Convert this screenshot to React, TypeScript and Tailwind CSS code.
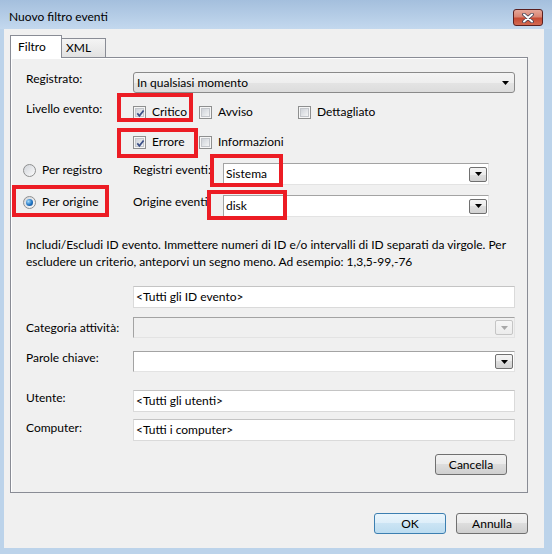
import React from "react";

const font = "font-['Lato',sans-serif] text-[12px] leading-[16px] text-black";

function Arrow({ color = "#000000" }: { color?: string }) {
  return (
    <svg width="7" height="4" viewBox="0 0 7 4">
      <path d="M0 0h7L3.5 4z" fill={color} />
    </svg>
  );
}

function DropButton({ disabled }: { disabled?: boolean }) {
  return (
    <span
      className={
        disabled
          ? "flex h-[15px] w-[18px] shrink-0 items-center justify-center rounded-[2px] border border-[#c5c5c5] bg-[linear-gradient(#f6f6f6,#ececec)]"
          : "flex h-[15px] w-[18px] shrink-0 items-center justify-center rounded-[2px] border border-[#707070] bg-[linear-gradient(#f4f4f4_0%,#ececec_50%,#dedede_50%,#d2d2d2_100%)]"
      }
    >
      <Arrow color={disabled ? "#a8a8a8" : "#000000"} />
    </span>
  );
}

function Check({ checked }: { checked?: boolean }) {
  return (
    <span className="relative flex h-[13px] w-[13px] shrink-0 items-center justify-center border border-[#8e8f8f] bg-[#f6f6f6]">
      <span className="h-[9px] w-[9px] border border-[#c3c6cb] bg-[linear-gradient(135deg,#cfd3d9,#f3f4f5)]" />
      {checked ? (
        <svg className="absolute left-[1px] top-[1px]" width="11" height="11" viewBox="0 0 11 11">
          <path d="M2.3 5.4L4.4 7.8L8.6 2.4" fill="none" stroke="#3c4f86" strokeWidth="1.7" />
        </svg>
      ) : null}
    </span>
  );
}

function Radio({ checked }: { checked?: boolean }) {
  return (
    <span className="flex h-[13px] w-[13px] shrink-0 items-center justify-center rounded-full border border-[#8e8f8f] bg-[linear-gradient(135deg,#d2d5da,#fbfbfb)]">
      {checked ? (
        <span className="h-[7px] w-[7px] rounded-full bg-[radial-gradient(circle_at_35%_35%,#a8dcfa,#1f74c4_55%,#0e3d78)]" />
      ) : null}
    </span>
  );
}

function Option({ label, checked, width }: { label: string; checked?: boolean; width: string }) {
  return (
    <div className={`flex items-center ${width}`}>
      <Check checked={checked} />
      <span className="ml-[6px]">{label}</span>
    </div>
  );
}

function EditCombo({ value, width, disabled }: { value: string; width: string; disabled?: boolean }) {
  return (
    <div
      className={`flex h-full items-center border border-t-[#a3a3a3] border-l-[#a3a3a3] border-r-[#e3e3e3] border-b-[#e3e3e3] pl-[1px] pr-[1px] ${width} ${
        disabled ? "bg-[#f0f0f0]" : "bg-white"
      }`}
    >
      <span className="flex-1 pl-[1px]">{value}</span>
      <DropButton disabled={disabled} />
    </div>
  );
}

function TextBox({ value }: { value: string }) {
  return (
    <div className="flex h-full w-[382px] items-center border border-[#dadada] border-t-[#c4c4c4] bg-white pl-[2px]">
      {value}
    </div>
  );
}

function PushButton({ label, primary, width }: { label: string; primary?: boolean; width: string }) {
  return (
    <div
      className={`flex h-[21px] items-center justify-center rounded-[3px] border ${width} ${
        primary
          ? "border-[#3c7fb1] bg-[linear-gradient(#eaf5fc_0%,#ddeef9_50%,#cbe4f4_50%,#bcdcf0_100%)]"
          : "border-[#707070] bg-[linear-gradient(#f2f2f2_0%,#ebebeb_50%,#dddddd_50%,#cfcfcf_100%)]"
      }`}
    >
      {label}
    </div>
  );
}

export default function App() {
  return (
    <div className={`relative flex h-[554px] w-[552px] flex-col overflow-hidden bg-[#bcd3ea] ${font}`}>
      {/* title bar */}
      <div className="flex h-[29px] shrink-0 items-start justify-between bg-[linear-gradient(#a4bfdd,#c3d8ee)] pl-[9px] pr-[9px]">
        <span className="mt-[9px]">Nuovo filtro eventi</span>
        <div className="mt-[9px] flex h-[17px] w-[30px] items-center justify-center rounded-[3px] border border-[#5a2020] bg-[linear-gradient(#e6a799_0%,#d98573_45%,#c64a33_55%,#d36a52_100%)]">
          <svg width="12" height="10" viewBox="0 0 12 10">
            <path d="M2 1.5L10 8.5M10 1.5L2 8.5" stroke="#3f3f52" strokeWidth="3.6" strokeLinecap="round" />
            <path d="M2 1.5L10 8.5M10 1.5L2 8.5" stroke="#ffffff" strokeWidth="2" strokeLinecap="round" />
          </svg>
        </div>
      </div>

      {/* client area */}
      <div className="mb-[6px] ml-[4px] mr-[8px] flex flex-1 flex-col bg-[#f0f0f0]">
        <div className="ml-[6px] mt-[6px] flex h-[22px] items-start">
          <div className="relative z-10 h-[23px] w-[52px] border border-b-0 border-[#898c95] bg-white pl-[7px] pt-[3px]">
            Filtro
          </div>
          <div className="-ml-[1px] mt-[3px] h-[19px] w-[45px] border border-b-0 border-[#898c95] bg-[linear-gradient(#f4f4f4,#e2e2e2)] pl-[4px] pt-[1px]">
            XML
          </div>
        </div>

        <div className="ml-[6px] h-[436px] w-[518px] border border-[#898c95] shadow-[inset_1px_1px_0_#ffffff]">
          {/* Registrato */}
          <div className="mt-[14px] flex h-[21px] items-start pl-[15px]">
            <span className="-mt-[1px] w-[107px]">Registrato:</span>
            <div className="flex h-[21px] w-[382px] items-center rounded-[3px] border border-[#8a8a8a] bg-[linear-gradient(#f4f4f4_0%,#eeeeee_50%,#e4e4e4_50%,#dcdcdc_100%)] pl-[3px] pr-[5px]">
              <span className="flex-1">In qualsiasi momento</span>
              <Arrow />
            </div>
          </div>

          {/* Livello evento */}
          <div className="mt-[11px] flex h-[16px] items-center pl-[15px]">
            <span className="mb-[6px] w-[107px]">Livello evento:</span>
            <Option label="Critico" checked width="w-[66px]" />
            <Option label="Avviso" width="w-[99px]" />
            <Option label="Dettagliato" width="w-[100px]" />
          </div>
          <div className="mt-[14px] flex h-[16px] items-center pl-[122px]">
            <Option label="Errore" checked width="w-[66px]" />
            <Option label="Informazioni" width="w-[100px]" />
          </div>

          {/* Per registro */}
          <div className="mt-[13px] flex h-[22px] items-start pl-[12px]">
            <div className="flex w-[110px] items-start">
              <span className="mt-[1px]">
                <Radio />
              </span>
              <span className="-mt-[1px] ml-[6px]">Per registro</span>
            </div>
            <span className="-mt-[1px] w-[90px]">Registri eventi:</span>
            <EditCombo value="Sistema" width="w-[266px]" />
          </div>

          {/* Per origine */}
          <div className="mt-[10px] flex h-[22px] items-start pl-[12px]">
            <div className="flex w-[110px] items-start">
              <span className="mt-[1px]">
                <Radio checked />
              </span>
              <span className="-mt-[1px] ml-[6px]">Per origine</span>
            </div>
            <span className="-mt-[1px] w-[90px]">Origine eventi:</span>
            <EditCombo value="disk" width="w-[266px]" />
          </div>

          <p className="mt-[19px] whitespace-nowrap pl-[15px] leading-[17px]">
            Includi/Escludi ID evento. Immettere numeri di ID e/o intervalli di ID separati da virgole. Per
            <br />
            escludere un criterio, anteporvi un segno meno. Ad esempio: 1,3,5-99,-76
          </p>

          <div className="ml-[122px] mt-[16px] h-[22px]">
            <TextBox value="<Tutti gli ID evento>" />
          </div>

          <div className="mt-[9px] flex h-[21px] items-center pl-[15px]">
            <span className="w-[107px]">Categoria attività:</span>
            <EditCombo value="" width="w-[382px]" disabled />
          </div>

          <div className="mt-[13px] flex h-[21px] items-start pl-[15px]">
            <span className="-mt-[1px] w-[107px]">Parole chiave:</span>
            <EditCombo value="" width="w-[382px]" />
          </div>

          <div className="mt-[18px] flex h-[22px] items-start pl-[15px]">
            <span className="w-[107px]">Utente:</span>
            <TextBox value="<Tutti gli utenti>" />
          </div>

          <div className="mt-[7px] flex h-[22px] items-start pl-[15px]">
            <span className="mt-[1px] w-[107px]">Computer:</span>
            <TextBox value="<Tutti i computer>" />
          </div>

          <div className="ml-[424px] mt-[13px]">
            <PushButton label="Cancella" width="w-[72px]" />
          </div>
        </div>

        <div className="mt-[20px] flex justify-end gap-[10px] pr-[16px]">
          <PushButton label="OK" primary width="w-[72px]" />
          <PushButton label="Annulla" width="w-[72px]" />
        </div>
      </div>

      {/* red annotation boxes */}
      <div className="absolute left-[117px] top-[93px] h-[29px] w-[76px] border-[4px] border-[#ec1c24]" />
      <div className="absolute left-[117px] top-[128px] h-[30px] w-[81px] border-[4px] border-[#ec1c24]" />
      <div className="absolute left-[210px] top-[154px] h-[33px] w-[73px] border-[4px] border-[#ec1c24]" />
      <div className="absolute left-[207px] top-[190px] h-[30px] w-[80px] border-[4px] border-[#ec1c24]" />
      <div className="absolute left-[12px] top-[185px] h-[32px] w-[97px] border-[4px] border-[#ec1c24]" />
    </div>
  );
}
